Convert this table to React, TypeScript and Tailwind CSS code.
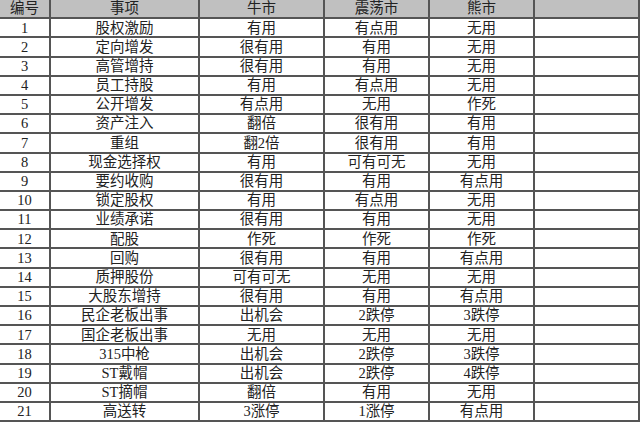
import React from "react";

const rows: string[][] = [
  ["1", "股权激励", "有用", "有点用", "无用"],
  ["2", "定向增发", "很有用", "有用", "无用"],
  ["3", "高管增持", "很有用", "有用", "无用"],
  ["4", "员工持股", "有用", "有点用", "无用"],
  ["5", "公开增发", "有点用", "无用", "作死"],
  ["6", "资产注入", "翻倍", "很有用", "有用"],
  ["7", "重组", "翻2倍", "很有用", "有用"],
  ["8", "现金选择权", "有用", "可有可无", "无用"],
  ["9", "要约收购", "很有用", "有用", "有点用"],
  ["10", "锁定股权", "有用", "有点用", "无用"],
  ["11", "业绩承诺", "很有用", "有用", "无用"],
  ["12", "配股", "作死", "作死", "作死"],
  ["13", "回购", "很有用", "有用", "有点用"],
  ["14", "质押股份", "可有可无", "无用", "无用"],
  ["15", "大股东增持", "很有用", "有用", "有点用"],
  ["16", "民企老板出事", "出机会", "2跌停", "3跌停"],
  ["17", "国企老板出事", "无用", "无用", "无用"],
  ["18", "315中枪", "出机会", "2跌停", "3跌停"],
  ["19", "ST戴帽", "出机会", "2跌停", "4跌停"],
  ["20", "ST摘帽", "翻倍", "有用", "无用"],
  ["21", "高送转", "3涨停", "1涨停", "有点用"],
];

const header = ["编号", "事项", "牛市", "震荡市", "熊市", ""];

export default function App() {
  return (
    <div
      className="w-[640px] h-[423px] bg-white overflow-hidden text-[#222] text-[14.5px] leading-none"
      style={{ fontFamily: '"Liberation Serif", "Noto Sans CJK SC", serif' }}
    >
      <div className="grid grid-cols-[51px_149px_125px_105px_105px_105px] grid-rows-[repeat(22,19.2px)]">
        {header.map((h, i) => (
          <div
            key={"h" + i}
            className="bg-[#c0c0c0] border-b-2 border-r-2 border-[#555] flex items-center justify-center"
          >
            {h}
          </div>
        ))}
        {rows.map((r, ri) => (
          <React.Fragment key={ri}>
            {r.map((c, ci) => (
              <div
                key={ci}
                className="border-b-2 border-r-2 border-[#555] flex items-center justify-center whitespace-nowrap"
              >
                {c}
              </div>
            ))}
            <div className="border-b-2 border-r-2 border-[#555]" />
          </React.Fragment>
        ))}
      </div>
    </div>
  );
}
